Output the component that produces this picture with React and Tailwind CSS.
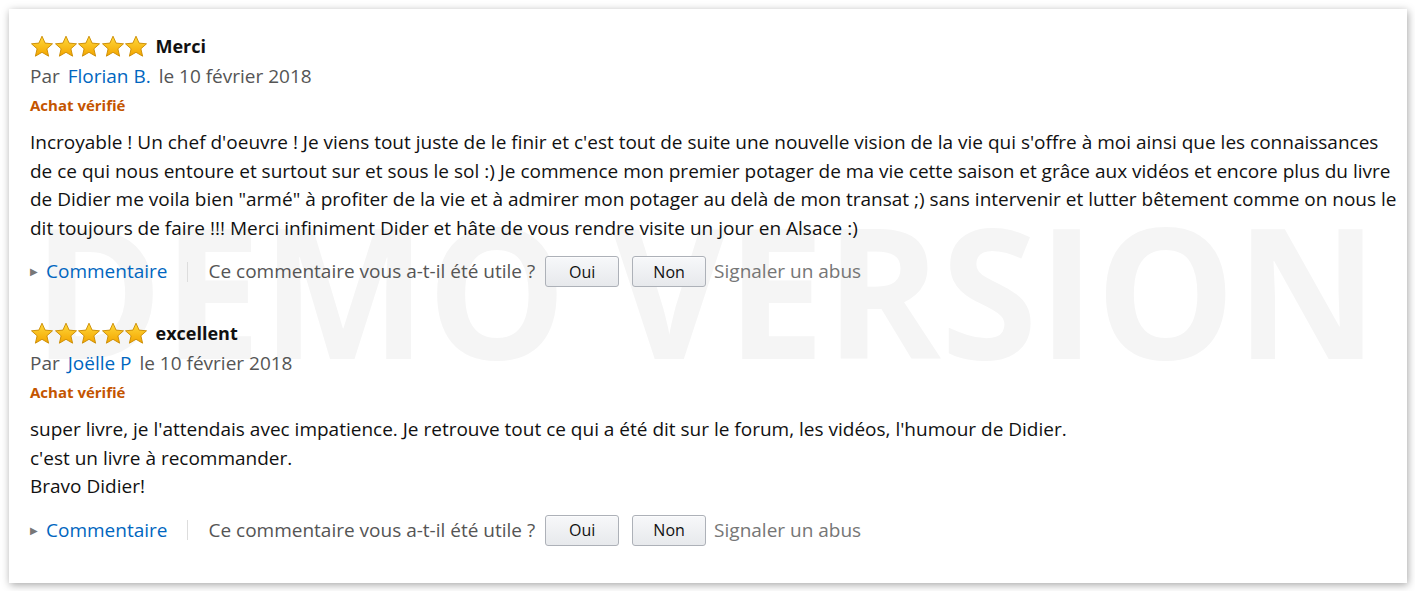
import React from 'react';

const REVIEWS = [
  {
    title: 'Merci',
    author: 'Florian B.',
    date: 'le 10 février 2018',
    body: [
      "Incroyable ! Un chef d'oeuvre ! Je viens tout juste de le finir et c'est tout de suite une nouvelle vision de la vie qui s'offre à moi ainsi que les connaissances",
      'de ce qui nous entoure et surtout sur et sous le sol :) Je commence mon premier potager de ma vie cette saison et grâce aux vidéos et encore plus du livre',
      'de Didier me voila bien "armé" à profiter de la vie et à admirer mon potager au delà de mon transat ;) sans intervenir et lutter bêtement comme on nous le',
      'dit toujours de faire !!! Merci infiniment Dider et hâte de vous rendre visite un jour en Alsace :)',
    ],
  },
  {
    title: 'excellent',
    author: 'Joëlle P',
    date: 'le 10 février 2018',
    body: [
      "super livre, je l'attendais avec impatience. Je retrouve tout ce qui a été dit sur le forum, les vidéos, l'humour de Didier.",
      "c'est un livre à recommander.",
      'Bravo Didier!',
    ],
  },
];

/* ── Star glyph ── */
function Star() {
  return (
    <svg width="24" height="23" viewBox="0 0 24 23" className="-mr-[0.5px]">
      <defs>
        <linearGradient id="starFill" x1="0" y1="0" x2="0" y2="1">
          <stop offset="0%" stopColor="#ffd93b" />
          <stop offset="100%" stopColor="#f3a500" />
        </linearGradient>
      </defs>
      <path
        d="M12 1.2l3.1 6.9 7.4.7-5.6 5 1.7 7.4L12 17.3l-6.6 3.9 1.7-7.4-5.6-5 7.4-.7z"
        fill="url(#starFill)"
        stroke="#c98a00"
        strokeWidth="0.9"
        strokeLinejoin="round"
      />
    </svg>
  );
}

function VoteButton({ children }) {
  return (
    <button className="h-[31px] w-[74px] rounded-[3px] border border-[#adb1b8] bg-gradient-to-b from-[#f7f8fa] to-[#e7e9ec] text-[16px] text-[#111] shadow-[0_1px_0_rgba(255,255,255,0.6)_inset]">
      {children}
    </button>
  );
}

function Review({ review }) {
  return (
    <div className="flex flex-col">
      <div className="flex items-center h-[26px]">
        <div className="flex">
          {[0, 1, 2, 3, 4].map((i) => (
            <Star key={i} />
          ))}
        </div>
        <span className="ml-[8px] text-[18px] font-bold text-[#111]">{review.title}</span>
      </div>
      <div className="mt-[4px] text-[19px] leading-[26px] text-[#555]">
        Par <span className="ml-[3px] mr-[3px] text-[#0066c0]">{review.author}</span> {review.date}
      </div>
      <div className="mt-[5px] text-[15px] font-bold leading-[22px] text-[#c45500]">Achat vérifié</div>
      <div className="mt-[12px] text-[19px] leading-[28.5px] text-[#111]">
        {review.body.map((line, i) => (
          <p key={i} className="whitespace-nowrap">{line}</p>
        ))}
      </div>
      <div className="mt-[14px] flex items-center h-[31px] text-[19px]">
        <span className="text-[10px] text-[#777] mr-[8px]">▶</span>
        <span className="text-[#0066c0]">Commentaire</span>
        <span className="mx-[20px] h-[20px] w-px bg-[#ddd]" />
        <span className="text-[#555]">Ce commentaire vous a-t-il été utile ?</span>
        <div className="ml-[10px] flex gap-[13px]">
          <VoteButton>Oui</VoteButton>
          <VoteButton>Non</VoteButton>
        </div>
        <span className="ml-[8px] text-[#767676]">Signaler un abus</span>
      </div>
    </div>
  );
}

export default function App() {
  return (
    <div className="h-[591px] w-[1415px] bg-white p-[9px] pr-[8px] pb-[8px] font-['Open_Sans',sans-serif]">
      <div className="relative h-[574px] w-[1398px] overflow-hidden bg-white shadow-[1px_2px_8px_rgba(0,0,0,0.35)]">
        <div className="pointer-events-none absolute left-[24px] top-[188px] origin-left scale-x-[0.965] select-none whitespace-nowrap text-[182px] font-bold leading-none text-[#f5f5f5]">
          DEMO VERSION
        </div>
        <div className="relative flex flex-col gap-[33px] pl-[21px] pr-[14px] pt-[24px]">
          {REVIEWS.map((r, i) => (
            <Review key={i} review={r} />
          ))}
        </div>
      </div>
    </div>
  );
}
